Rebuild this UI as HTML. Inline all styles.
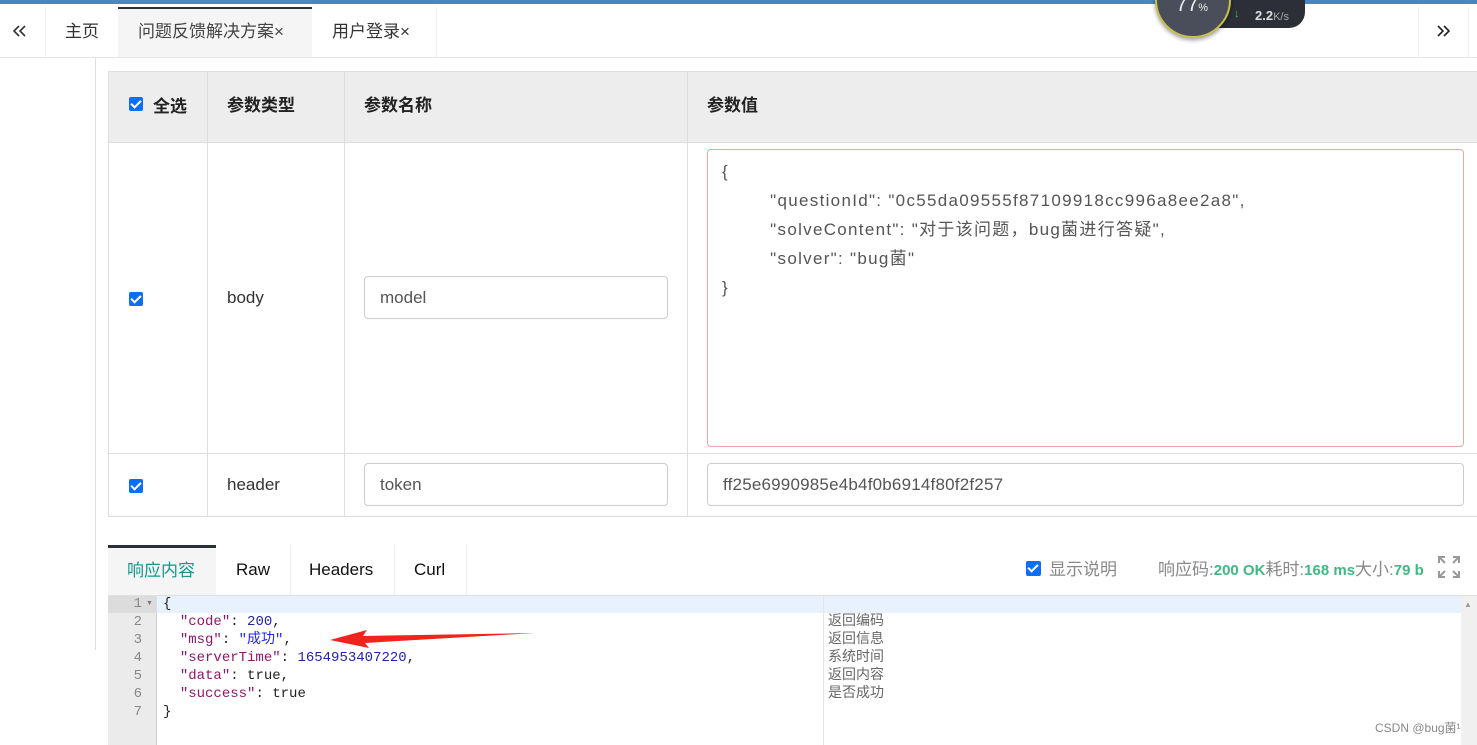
<!DOCTYPE html>
<html><head><meta charset="utf-8"><style>
*{box-sizing:border-box;margin:0;padding:0}
body{width:1477px;height:745px;overflow:hidden;background:#fff;font-family:"Liberation Sans","Noto Sans CJK SC",sans-serif;position:relative;color:#333}
.a{position:absolute}
.th{font-weight:bold;font-size:17px;color:#222}
.inp{position:absolute;border:1px solid #ccc;border-radius:4px;background:#fff;font-size:17px;color:#555;padding-left:15px;display:flex;align-items:center}
.mono{font-family:"Liberation Mono","Noto Sans CJK SC",monospace;font-size:14px;line-height:18px;white-space:pre}
.k{color:#91166b}.n{color:#2424a8}.s{color:#2424ff}
.cb{position:absolute;width:14px;height:14px;background:#0b6ef5;border-radius:2px}
.cb:after{content:"";position:absolute;left:4px;top:1px;width:4px;height:8px;border:solid #fff;border-width:0 2px 2px 0;transform:rotate(45deg)}
</style></head><body>
<div class="a" style="left:0;top:0;width:1477px;height:4px;background:#4a86c0"></div>
<div class="a" style="left:0;top:57px;width:1477px;height:1px;background:#e6e6e6"></div>
<div class="a" style="left:45px;top:7px;width:1px;height:50px;background:#eee"></div>
<svg class="a" style="left:13px;top:25px" width="14" height="12" fill="none" stroke="#333" stroke-width="1.6"><path d="M6 1L1 6l5 5M12 1L7 6l5 5"/></svg>
<div class="a" style="left:65px;top:17px;font-size:17px">主页</div>
<div class="a" style="left:118px;top:7px;width:194px;height:50px;background:#f5f5f5;border-top:2px solid #2b2f3a"></div>
<div class="a" style="left:138px;top:17px;font-size:17px;color:#444">问题反馈解决方案×</div>
<div class="a" style="left:332px;top:17px;font-size:17px">用户登录×</div>
<div class="a" style="left:436px;top:7px;width:1px;height:50px;background:#eee"></div>
<div class="a" style="left:1418px;top:7px;width:1px;height:50px;background:#eee"></div>
<div class="a" style="left:1468px;top:7px;width:1px;height:50px;background:#eee"></div>
<svg class="a" style="left:1437px;top:25px" width="14" height="12" fill="none" stroke="#222" stroke-width="1.6"><path d="M1 1l5 5-5 5M7 1l5 5-5 5"/></svg>
<div class="a" style="left:1190px;top:-10px;width:115px;height:38px;background:#2c2f38;border-radius:0 0 16px 0"></div>
<div class="a" style="left:1155px;top:-38px;width:76px;height:76px;border-radius:50%;background:#4a4e5a;border:2px solid #c8c048;box-shadow:0 2px 4px rgba(0,0,0,.4)"></div>
<div class="a" style="left:1176px;top:-6px;font-size:20px;color:#eee">77<span style="font-size:11px">%</span></div>
<div class="a" style="left:1234px;top:8px;font-size:11px;color:#3c3">↓</div>
<div class="a" style="left:1255px;top:8px;font-size:13px;color:#ddd;font-weight:bold">2.2<span style="font-size:11px;color:#aaa;font-weight:normal">K/s</span></div>
<div class="a" style="left:95px;top:58px;width:1px;height:592px;background:#ddd"></div>
<div class="a" style="left:108px;top:71px;width:1369px;height:71px;background:#ededed"></div>
<div class="a" style="left:108px;top:71px;width:1369px;height:446px;border:1px solid #ddd;border-right:none"></div>
<div class="a" style="left:108px;top:142px;width:1369px;height:1px;background:#ddd"></div>
<div class="a" style="left:108px;top:453px;width:1369px;height:1px;background:#ddd"></div>
<div class="a" style="left:207px;top:71px;width:1px;height:446px;background:#ddd"></div>
<div class="a" style="left:344px;top:71px;width:1px;height:446px;background:#ddd"></div>
<div class="a" style="left:687px;top:71px;width:1px;height:446px;background:#ddd"></div>
<div class="cb" style="left:129px;top:97px"></div>
<div class="a th" style="left:153px;top:92px">全选</div>
<div class="a th" style="left:227px;top:91px">参数类型</div>
<div class="a th" style="left:364px;top:91px">参数名称</div>
<div class="a th" style="left:707px;top:91px">参数值</div>
<div class="cb" style="left:129px;top:292px"></div>
<div class="a" style="left:227px;top:288px;font-size:17px">body</div>
<div class="inp" style="left:364px;top:276px;width:304px;height:43px">model</div>
<div class="a" style="left:707px;top:149px;width:757px;height:298px;border:1px solid #e8a8a8;border-radius:4px;font-size:17px;color:#555;line-height:29px;padding:7px 0 0 14px;white-space:pre;letter-spacing:1.3px">{
        "questionId": "0c55da09555f87109918cc996a8ee2a8",
        "solveContent": "对于该问题，bug菌进行答疑",
        "solver": "bug菌"
}</div>
<div class="cb" style="left:129px;top:479px"></div>
<div class="a" style="left:227px;top:475px;font-size:17px">header</div>
<div class="inp" style="left:364px;top:463px;width:304px;height:43px">token</div>
<div class="inp" style="left:707px;top:463px;width:757px;height:43px;letter-spacing:.2px">ff25e6990985e4b4f0b6914f80f2f257</div>
<div class="a" style="left:108px;top:595px;width:1369px;height:1px;background:#e0e0e0;box-shadow:0 1px 3px rgba(0,0,0,.08)"></div>
<div class="a" style="left:108px;top:545px;width:108px;height:50px;background:#f5f5f5;border-top:3px solid #2b2f3a"></div>
<div class="a" style="left:127px;top:556px;font-size:17px;color:#13998a">响应内容</div>
<div class="a" style="left:236px;top:560px;font-size:17px;color:#111">Raw</div>
<div class="a" style="left:309px;top:560px;font-size:17px;color:#111">Headers</div>
<div class="a" style="left:414px;top:560px;font-size:17px;color:#111">Curl</div>
<div class="a" style="left:290px;top:546px;width:1px;height:49px;background:#f0f0f0"></div>
<div class="a" style="left:394px;top:546px;width:1px;height:49px;background:#f0f0f0"></div>
<div class="a" style="left:466px;top:546px;width:1px;height:49px;background:#f0f0f0"></div>
<div class="cb" style="left:1026px;top:561px;width:15px;height:15px"></div>
<div class="a" style="left:1049px;top:555px;font-size:17px;color:#888">显示说明</div>
<div class="a" style="left:1158px;top:555px;font-size:17px;color:#888;white-space:nowrap">响应码:<b style="color:#41b883;font-size:15px">200 OK</b>耗时:<b style="color:#41b883;font-size:15px">168 ms</b>大小:<b style="color:#41b883;font-size:15px">79 b</b></div>
<svg class="a" style="left:1438px;top:556px" width="22" height="22" viewBox="0 0 22 22" fill="none" stroke="#999" stroke-width="2"><path d="M1 7V1h6M1 1l6 6M15 1h6v6M21 1l-6 6M1 15v6h6M1 21l6-6M21 15v6h-6M21 21l-6-6"/></svg>
<div class="a" style="left:108px;top:596px;width:49px;height:149px;background:#ebebeb;border-right:1px solid #ccc"></div>
<div class="a" style="left:108px;top:596px;width:49px;height:17px;background:#dcdcdc"></div>
<div class="a" style="left:157px;top:596px;width:1304px;height:17px;background:#e8f2fe"></div>
<div class="a mono" style="left:108px;top:595px;width:34px;text-align:right;color:#888">1
2
3
4
5
6
7</div>
<div class="a" style="left:146px;top:600px;font-size:7px;color:#777">▼</div>
<div class="a mono" style="left:163px;top:595px;color:#222">{
  <span class="k">"code"</span>: <span class="n">200</span>,
  <span class="k">"msg"</span>: <span class="s">"成功"</span>,
  <span class="k">"serverTime"</span>: <span class="n">1654953407220</span>,
  <span class="k">"data"</span>: true,
  <span class="k">"success"</span>: true
}</div>
<div class="a" style="left:823px;top:596px;width:1px;height:149px;background:#e5e5e5"></div>
<div class="a" style="left:828px;top:611px;font-size:14px;line-height:18px;color:#666">返回编码<br>返回信息<br>系统时间<br>返回内容<br>是否成功</div>
<div class="a" style="left:1461px;top:596px;width:16px;height:149px;background:#f0f0f0"></div>
<div class="a" style="left:1464px;top:600px;font-size:8px;color:#999">▲</div>
<div class="a" style="left:1375px;top:719px;font-size:12px;color:#888">CSDN @bug菌¹</div>
<svg class="a" style="left:325px;top:625px" width="215" height="25"><polygon points="5,15 42,5 38,11 210,8 40,18 44,23" fill="#f0231e"/></svg>
</body></html>
